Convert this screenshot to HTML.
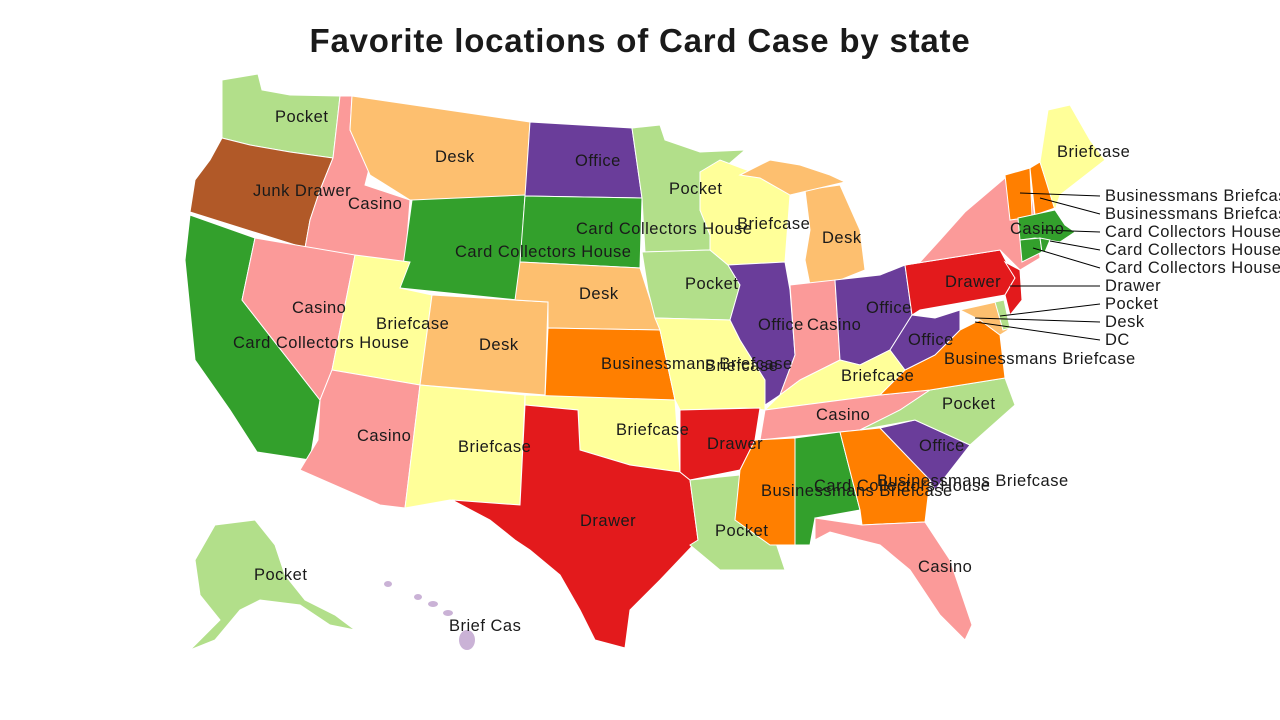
<!DOCTYPE html>
<html><head><meta charset="utf-8"><style>
html,body{margin:0;padding:0;background:#fff;width:1280px;height:720px;overflow:hidden}
svg text{font-family:"Liberation Sans",sans-serif;font-size:16.5px;letter-spacing:0.5px;fill:#1a1a1a}
</style></head><body>
<svg width="1280" height="720" viewBox="0 0 1280 720" xmlns="http://www.w3.org/2000/svg">
<text x="640" y="52" text-anchor="middle" style="font-size:33px;font-weight:bold;letter-spacing:0.8px">Favorite locations of Card Case by state</text>
<g stroke="#fff" stroke-width="1">
<polygon fill="#b2df8a" points="222,80 258,74 262,90 290,95 340,96 333,158 290,152 250,145 222,138"/>
<polygon fill="#b15928" points="222,138 250,145 290,152 333,158 320,190 310,220 305,248 190,212 195,180 210,160"/>
<polygon fill="#fb9a99" points="340,96 352,96 350,130 370,165 365,185 410,200 405,265 305,248 310,220 320,190 333,158"/>
<polygon fill="#fdbf6f" points="352,96 530,122 525,200 410,200 370,175 350,130"/>
<polygon fill="#33a02c" points="412,200 525,195 518,300 400,288"/>
<polygon fill="#33a02c" points="190,215 255,238 242,300 320,400 310,460 257,452 230,410 195,360 185,260"/>
<polygon fill="#fb9a99" points="255,238 355,255 332,370 320,400 242,300"/>
<polygon fill="#ffff99" points="355,255 410,262 400,288 432,295 420,385 332,370"/>
<polygon fill="#fb9a99" points="332,370 420,385 405,508 380,505 300,470 318,440 320,400"/>
<polygon fill="#fdbf6f" points="432,295 548,302 545,395 420,385"/>
<polygon fill="#ffff99" points="420,385 525,395 520,505 450,500 405,508"/>
<polygon fill="#6a3d9a" points="530,122 632,128 642,198 525,196"/>
<polygon fill="#33a02c" points="525,196 642,198 640,268 520,262"/>
<polygon fill="#fdbf6f" points="520,262 640,268 660,330 548,328 548,302 515,300"/>
<polygon fill="#ff7f00" points="548,328 660,330 675,400 545,398"/>
<polygon fill="#ffff99" points="525,395 675,400 680,472 630,465 580,450 578,410 525,405"/>
<polygon fill="#e31a1c" points="525,405 578,410 580,450 630,465 680,472 690,480 698,540 660,580 630,610 625,648 595,640 580,610 560,575 530,550 515,540 490,520 452,500 520,505"/>
<polygon fill="#b2df8a" points="632,128 660,125 665,140 700,152 745,150 710,180 700,210 710,235 710,250 645,252 642,198"/>
<polygon fill="#b2df8a" points="642,252 710,250 728,265 740,285 730,320 655,318 648,290"/>
<polygon fill="#ffff99" points="655,318 730,320 740,340 765,380 765,410 745,408 680,410 675,400 660,330"/>
<polygon fill="#e31a1c" points="680,410 760,408 755,440 740,470 690,480 680,472"/>
<polygon fill="#b2df8a" points="690,480 740,475 735,520 770,525 785,570 720,570 690,545 698,540"/>
<polygon fill="#ffff99" points="700,172 720,160 760,175 790,195 785,262 728,265 710,250 710,235 700,210"/>
<polygon fill="#6a3d9a" points="728,265 785,262 790,290 795,355 780,395 765,405 765,380 740,340 730,320 740,285"/>
<polygon fill="#fdbf6f" points="805,190 840,185 860,230 865,270 840,280 810,285 805,260 810,230"/>
<polygon fill="#fdbf6f" points="740,175 770,160 800,165 830,175 845,182 790,195 760,178"/>
<polygon fill="#fb9a99" points="790,285 835,280 840,360 800,380 780,395 795,355"/>
<polygon fill="#6a3d9a" points="835,280 880,275 905,265 912,315 890,350 860,365 840,360"/>
<polygon fill="#ffff99" points="800,380 840,360 860,365 890,350 905,370 880,395 765,410 780,395"/>
<polygon fill="#fb9a99" points="765,410 880,395 930,390 900,410 860,430 760,440"/>
<polygon fill="#ff7f00" points="755,440 795,438 795,545 770,545 735,520 740,470"/>
<polygon fill="#33a02c" points="795,438 840,432 860,510 815,518 810,545 795,545"/>
<polygon fill="#ff7f00" points="840,432 880,428 930,480 925,522 862,525 860,510"/>
<polygon fill="#fb9a99" points="815,518 862,525 925,522 950,560 972,625 965,640 940,615 910,570 880,545 860,540 830,532 815,540"/>
<polygon fill="#6a3d9a" points="880,428 915,420 970,445 935,490 930,480"/>
<polygon fill="#b2df8a" points="900,410 930,390 1005,378 1015,405 970,445 915,420 860,430"/>
<polygon fill="#ff7f00" points="880,395 905,370 935,355 960,330 980,320 1000,335 1005,378 930,390"/>
<polygon fill="#6a3d9a" points="890,350 912,315 935,318 960,310 960,330 935,355 905,370"/>
<polygon fill="#e31a1c" points="905,265 1000,250 1015,278 1005,295 920,310 912,315"/>
<polygon fill="#fb9a99" points="920,262 940,240 965,212 1005,178 1030,180 1040,258 1020,270 1000,250 905,265"/>
<polygon fill="#e31a1c" points="1005,262 1020,270 1022,300 1010,315 1005,295 1015,278"/>
<polygon fill="#fdbf6f" points="960,310 1005,300 1008,330 1000,335 980,320"/>
<polygon fill="#b2df8a" points="995,302 1004,300 1010,328 1003,330"/>
<polygon fill="#ff7f00" points="1005,175 1030,168 1032,215 1025,218 1010,220"/>
<polygon fill="#ff7f00" points="1030,168 1040,162 1055,208 1035,215"/>
<polygon fill="#ffff99" points="1040,162 1048,110 1070,105 1090,140 1105,160 1060,195 1055,210"/>
<polygon fill="#33a02c" points="1018,218 1055,210 1065,225 1075,232 1060,242 1035,238 1020,240"/>
<polygon fill="#33a02c" points="1020,240 1040,238 1042,252 1022,262"/>
<polygon fill="#33a02c" points="1040,238 1050,240 1045,252 1042,252"/>
<polygon fill="#b2df8a" points="215,525 255,520 275,545 285,575 305,600 335,615 355,630 330,625 300,605 260,600 240,610 215,640 190,650 220,620 200,595 195,560"/>
</g>
<g fill="#cab2d6"><ellipse cx="388" cy="584" rx="4" ry="3"/><ellipse cx="418" cy="597" rx="4" ry="3"/><ellipse cx="433" cy="604" rx="5" ry="3"/><ellipse cx="448" cy="613" rx="5" ry="3"/><ellipse cx="467" cy="640" rx="8" ry="10"/></g>
<g stroke="#000" stroke-width="1">
<line x1="1020" y1="193" x2="1100" y2="196"/><line x1="1040" y1="198" x2="1100" y2="214"/>
<line x1="1043" y1="230" x2="1100" y2="232"/><line x1="1050" y1="241" x2="1100" y2="250"/>
<line x1="1033" y1="248" x2="1100" y2="268"/><line x1="1010" y1="286" x2="1100" y2="286"/>
<line x1="1000" y1="316" x2="1100" y2="304"/><line x1="975" y1="318" x2="1100" y2="322"/>
<line x1="975" y1="322" x2="1100" y2="340"/>
</g>
<g>
<text x="275" y="122">Pocket</text><text x="253" y="196">Junk Drawer</text><text x="348" y="209">Casino</text>
<text x="435" y="162">Desk</text><text x="575" y="166">Office</text><text x="669" y="194">Pocket</text>
<text x="455" y="257">Card Collectors House</text><text x="576" y="234">Card Collectors House</text>
<text x="737" y="229">Briefcase</text><text x="822" y="243">Desk</text><text x="292" y="313">Casino</text>
<text x="376" y="329">Briefcase</text><text x="233" y="348">Card Collectors House</text><text x="579" y="299">Desk</text>
<text x="685" y="289">Pocket</text><text x="479" y="350">Desk</text><text x="601" y="369">Businessmans Briefcase</text>
<text x="705" y="371">Briefcase</text><text x="758" y="330">Office</text><text x="807" y="330">Casino</text>
<text x="866" y="313">Office</text><text x="908" y="345">Office</text><text x="841" y="381">Briefcase</text>
<text x="944" y="364">Businessmans Briefcase</text><text x="942" y="409">Pocket</text><text x="816" y="420">Casino</text>
<text x="357" y="441">Casino</text><text x="616" y="435">Briefcase</text><text x="458" y="452">Briefcase</text>
<text x="707" y="449">Drawer</text><text x="919" y="451">Office</text><text x="877" y="486">Businessmans Briefcase</text>
<text x="814" y="491">Card Collectors House</text><text x="761" y="496">Businessmans Briefcase</text>
<text x="580" y="526">Drawer</text><text x="715" y="536">Pocket</text><text x="918" y="572">Casino</text>
<text x="254" y="580">Pocket</text><text x="449" y="631">Brief Cas</text>
<text x="1057" y="157">Briefcase</text><text x="1010" y="234">Casino</text><text x="945" y="287">Drawer</text>
<text x="1105" y="201">Businessmans Briefcase</text><text x="1105" y="219">Businessmans Briefcase</text>
<text x="1105" y="237">Card Collectors House</text><text x="1105" y="255">Card Collectors House</text>
<text x="1105" y="273">Card Collectors House</text><text x="1105" y="291">Drawer</text>
<text x="1105" y="309">Pocket</text><text x="1105" y="327">Desk</text><text x="1105" y="345">DC</text>
</g>
</svg>
</body></html>
